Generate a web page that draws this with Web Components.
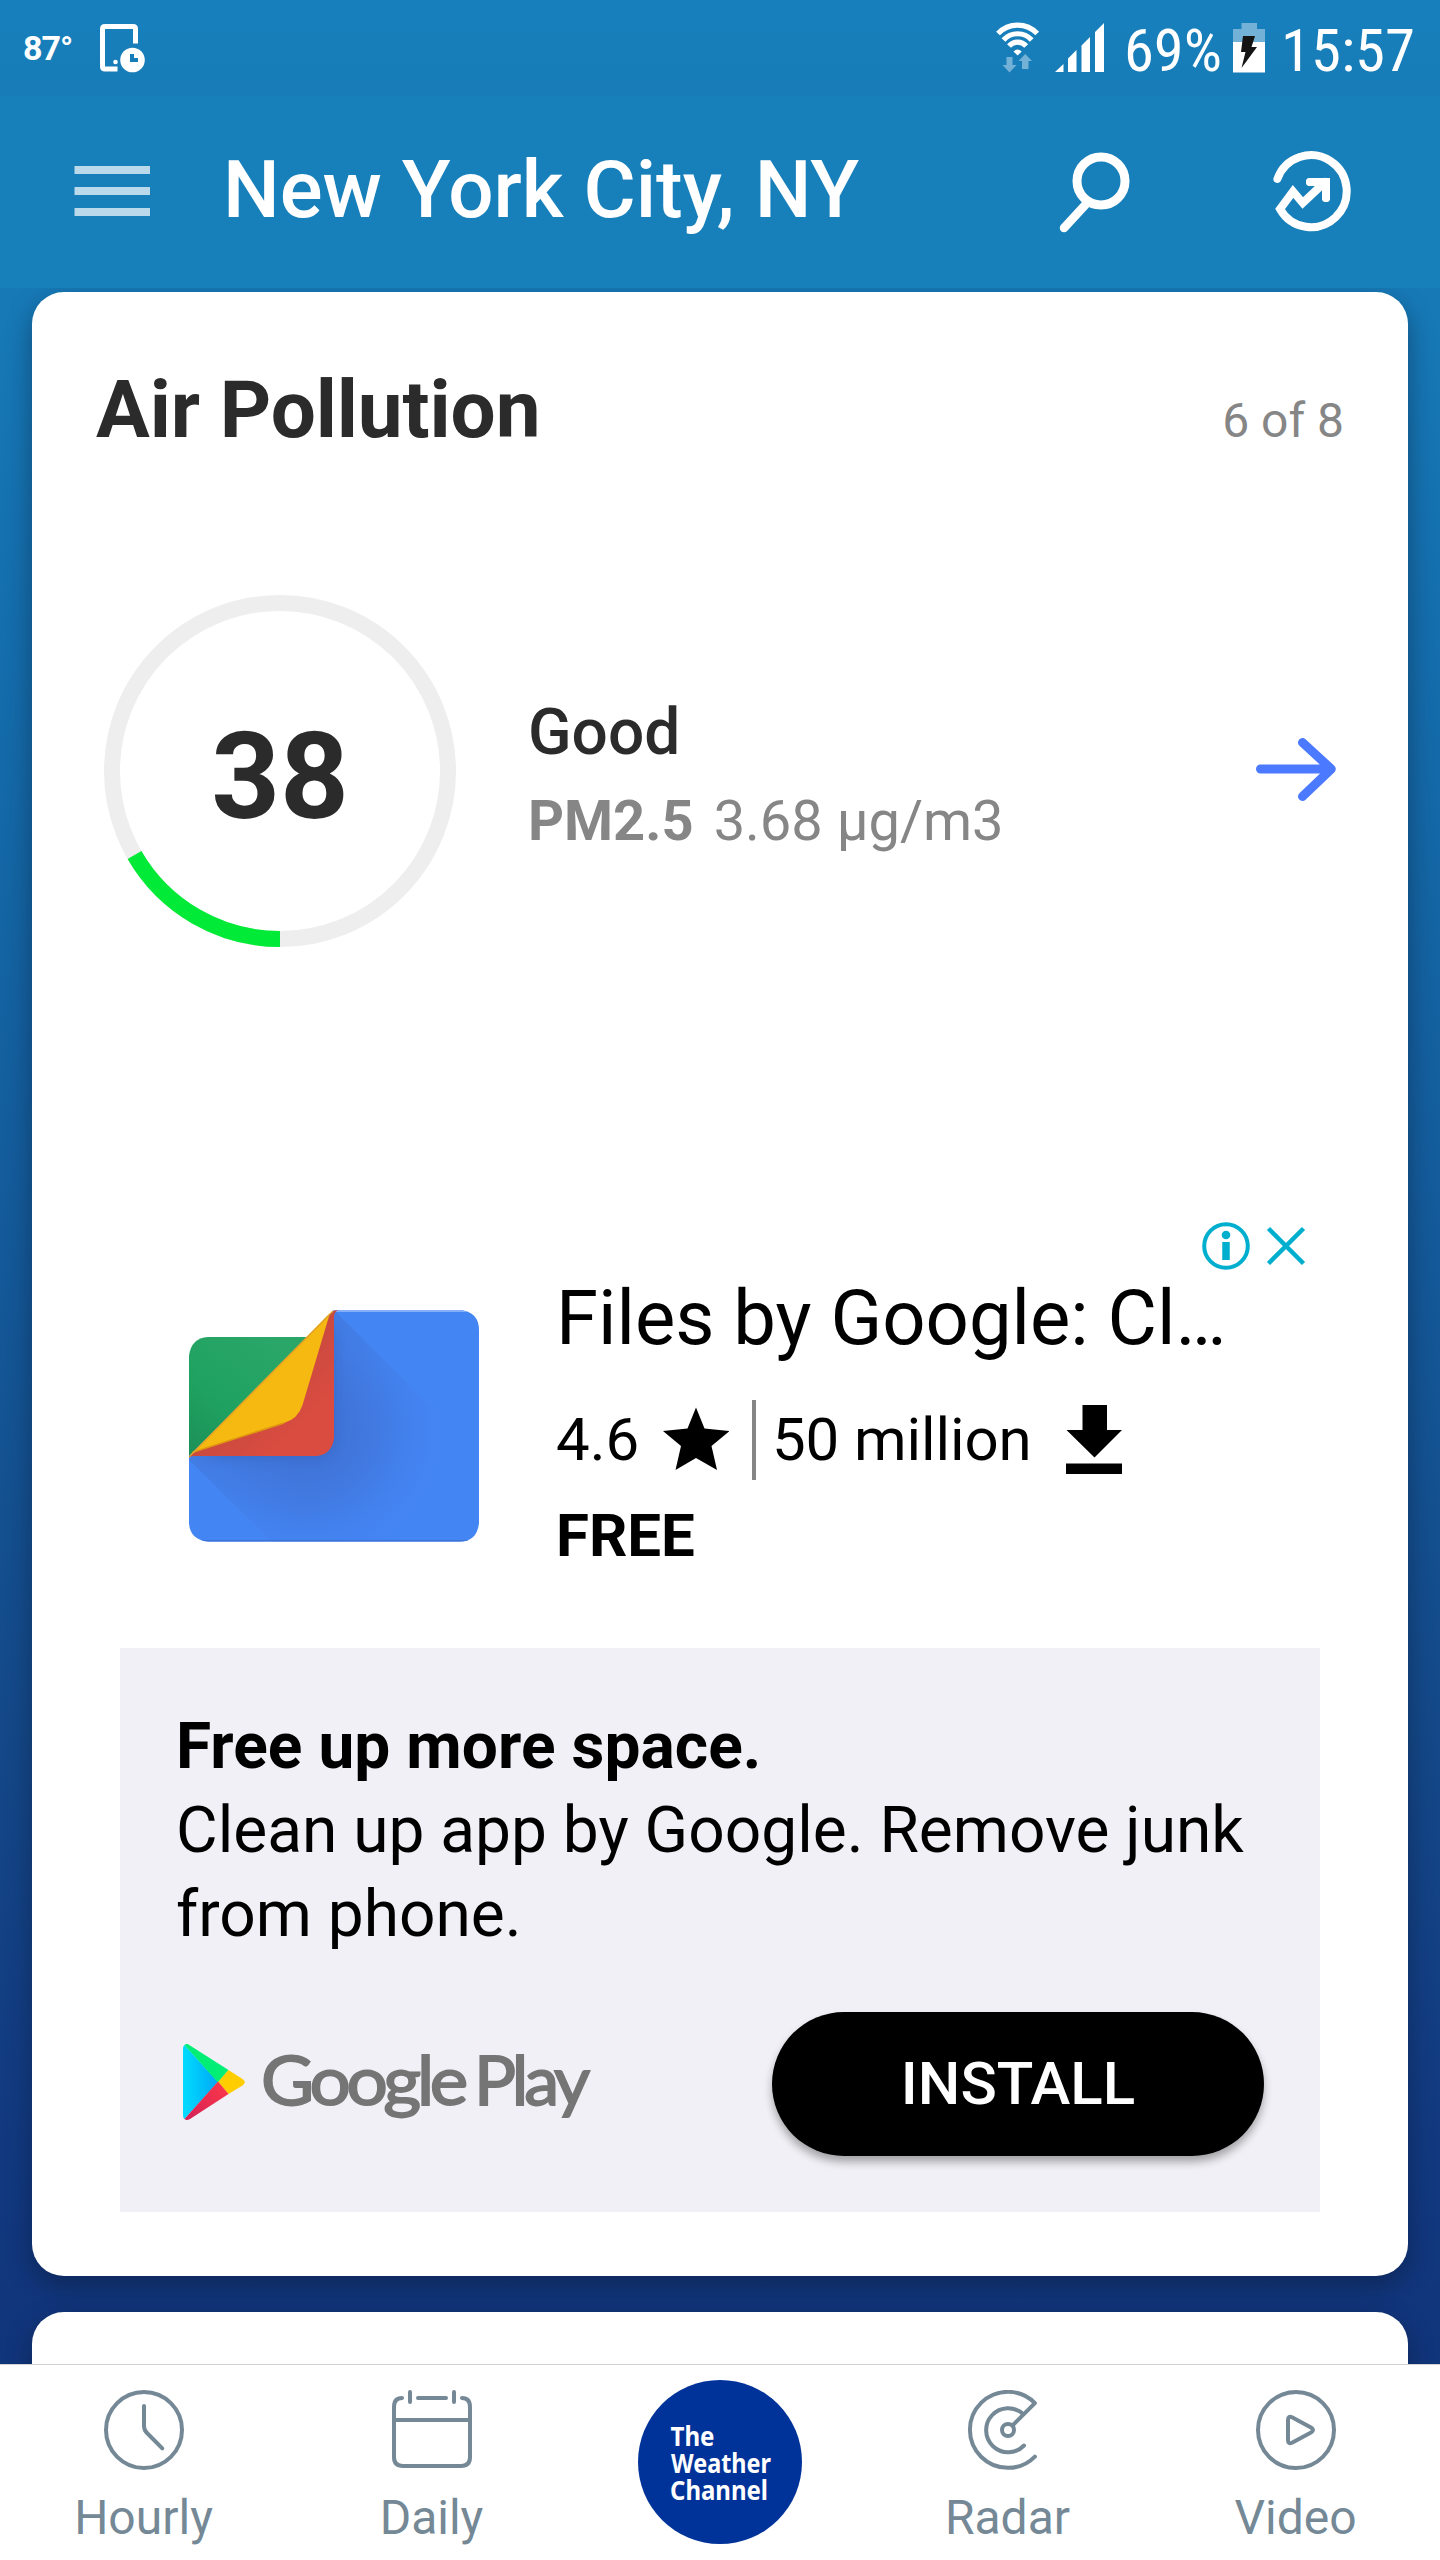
<!DOCTYPE html>
<html lang="en">
<head>
<meta charset="utf-8">
<title>New York City, NY</title>
<style>
html, body { margin: 0; padding: 0; }
body { width: 1440px; height: 2560px; overflow: hidden; font-family: Roboto, "Liberation Sans", sans-serif; background: #fff; }
</style>
</head>
<body>
<weather-app></weather-app>

<template id="t-weather-app">
  <style>
    :host { display: flex; flex-direction: column; width: 1440px; height: 2560px; }
    main { flex: 1; min-height: 0; overflow: hidden; display: flex; flex-direction: column; gap: 36px; padding: 4px 32px 0; box-sizing: border-box;
      background: linear-gradient(#177ab7 0, #1571b0 250px, #1467a6 560px, #145a9a 950px, #144888 1450px, #123980 1850px, #11357b 2076px); }
  </style>
  <status-bar></status-bar>
  <title-bar>New York City, NY</title-bar>
  <main>
    <feed-card style="height:1984px">
      <card-head slot="head"><span>Air Pollution</span><span slot="count">6 of 8</span></card-head>
      <air-quality value="38"><span slot="level">Good</span><span slot="kind">PM2.5</span><span slot="amount">3.68 µg/m3</span></air-quality>
      <app-ad></app-ad>
    </feed-card>
    <feed-card style="height:300px"></feed-card>
  </main>
  <tab-bar></tab-bar>
</template>

<template id="t-status-bar">
  <style>
    :host { display: flex; align-items: center; justify-content: space-between; height: 96px; padding: 0 26px 0 23px; background: linear-gradient(#1780bc, #177cb8); color: #fff; box-sizing: border-box; }
    div { display: flex; align-items: center; }
    svg { display: block; flex: none; }
    .t { font-size: 34px; font-weight: 700; letter-spacing: -1px; width: 77px; white-space: nowrap; }
    text { font-family: "Roboto Condensed", Roboto, sans-serif; font-size: 60px; fill: #fff; }
  </style>
  <div>
    <span class="t">87°</span>
    <svg width="46" height="96" viewBox="100 0 46 96">
      <path d="M135.500 43.500V29Q135.500 26.500 133 26.500H105Q102.500 26.500 102.500 29V66.500Q102.500 69 105 69H117.500" fill="none" stroke="#fff" stroke-width="5"/>
      <circle cx="115.500" cy="62" r="2.300" fill="#fff"/>
      <circle cx="132.500" cy="60" r="12.300" fill="#fff"/>
      <path d="M132 54V60H138" fill="none" stroke="#177db9" stroke-width="4"/>
    </svg>
  </div>
  <div>
    <svg width="420" height="96" viewBox="994 0 420 96">
      <g fill="none" stroke="#fff" stroke-width="5.200">
        <path d="M998 33.500A27 27 0 0 1 1037.200 33.500"/>
        <path d="M1003.500 40A19 19 0 0 1 1031.700 40"/>
        <path d="M1009 46A11.500 11.500 0 0 1 1026.200 46"/>
      </g>
      <path d="M1013.500 51.500Q1017.600 47.500 1021.700 51.500L1017.600 55.500Z" fill="#fff"/>
      <path d="M1006.500 57H1012.500V65H1016.500L1009.500 72.500L1002.500 65H1006.500ZM1022 69H1028.500V61H1032L1025.200 54L1018.500 61H1022Z" fill="#74b1d6"/>
      <path d="M1055 72L1063.500 64V72ZM1068 72V58.500L1076.500 50V72ZM1081.500 72V45.500L1090 37V72ZM1095 72V32L1104 23V72Z" fill="#fff"/>
      <text x="1124" y="71" textLength="98" lengthAdjust="spacingAndGlyphs">69%</text>
      <path d="M1241.500 23H1257V29H1265V42H1233V29H1241.500Z" fill="#74b1d6"/>
      <path d="M1233 42H1265V72.500H1233Z" fill="#fff"/>
      <path d="M1243 36H1255L1251.500 47H1257L1241.500 68L1245.500 52H1241Z" fill="#141414"/>
      <text x="1281" y="71" textLength="134" lengthAdjust="spacingAndGlyphs">15:57</text>
    </svg>
  </div>
</template>

<template id="t-title-bar">
  <style>
    :host { display: flex; align-items: center; height: 192px; background: #177fba; color: #fff; padding: 0 88px 0 74px; box-sizing: border-box; }
    svg { display: block; flex: none; }
    h1 { margin: 0 auto 5px 73px; font-size: 80px; line-height: 94px; font-weight: 500; white-space: nowrap; }
    .search { margin-right: 143px; }
  </style>
  <svg width="76" height="192" viewBox="74 96 76 192"><path d="M74.500 166H150V174H74.500ZM74.500 187H150V195H74.500ZM74.500 208H150V216H74.500Z" fill="#bad9ea"/></svg>
  <h1><slot></slot></h1>
  <svg class="search" width="71" height="192" viewBox="1058 96 71 192" fill="none" stroke="#fff" stroke-linecap="round">
    <circle cx="1100" cy="181" r="24" stroke-width="9"/><path d="M1086 203L1063 228" stroke-width="8.500"/>
  </svg>
  <svg width="79" height="192" viewBox="1273 96 79 192" fill="none" stroke="#fff" stroke-width="8" stroke-linecap="round">
    <path d="M1277.400 179A35.700 36 0 1 1 1280 209L1293 191.500L1302.800 203L1325 182M1310 182H1326V198" stroke-linejoin="miter"/>
    <path d="M1310 182H1326V198" stroke-linejoin="round"/>
  </svg>
</template>

<template id="t-feed-card">
  <style>
    :host { display: flex; flex-direction: column; flex: none; box-sizing: border-box; background: #fff; border-radius: 32px; padding: 71px 64px 0; box-shadow: 0 10px 26px rgba(10,20,40,.42); }
  </style>
  <slot name="head"></slot><slot></slot>
</template>

<template id="t-card-head">
  <style>
    :host { display: flex; align-items: baseline; justify-content: space-between; height: 94px; color: #2b2b2b; }
    h2 { margin: 0; font-size: 80px; line-height: 94px; font-weight: 700; letter-spacing: -.1px; }
    p { margin: 0; font-size: 48px; color: #868686; }
  </style>
  <h2><slot></slot></h2><p><slot name="count"></slot></p>
</template>

<template id="t-air-quality">
  <style>
    :host { display: flex; align-items: flex-start; margin: 138px 8px 0; height: 352px; color: #2b2b2b; }
    .ring { display: grid; width: 352px; height: 352px; flex: none; }
    .ring > * { grid-area: 1 / 1; }
    .num { place-self: center; padding-top: 11px; font-size: 120px; font-weight: 700; line-height: 140px; }
    .info { margin: 100px auto 0 72px; display: flex; flex-direction: column; gap: 17px; }
    .good { font-size: 64px; font-weight: 500; line-height: 76px; }
    .pm { display: flex; gap: 20px; font-size: 56px; line-height: 66px; color: #868686; white-space: nowrap; }
    b { font-weight: 700; }
    .arrow { margin-top: 142px; }
    svg { display: block; }
  </style>
  <div class="ring">
    <svg width="352" height="352" viewBox="0 0 352 352" fill="none" stroke-width="16">
      <circle cx="176" cy="176" r="168" stroke="#eeeeee"/>
      <path d="M176 344A168 168 0 0 1 30.500 260" stroke="#00ea37"/>
    </svg>
    <div class="num"></div>
  </div>
  <div class="info">
    <div class="good"><slot name="level"></slot></div>
    <div class="pm"><b><slot name="kind"></slot></b><slot name="amount"></slot></div>
  </div>
  <svg class="arrow" width="80" height="64" viewBox="1256 737 80 64" fill="none" stroke="#4b79ff" stroke-width="9" stroke-linecap="round" stroke-linejoin="round"><path d="M1260.500 769H1331M1302.500 742.500L1331.300 769L1302.500 796.500"/></svg>
</template>

<template id="t-app-ad">
  <style>
    :host { display: flex; flex-direction: column; margin: 275px 24px 0; color: #000; }
    svg { display: block; flex: none; }
    .choices { display: flex; justify-content: flex-end; padding-right: 14px; height: 48px; }
    .top { display: flex; height: 378px; padding-left: 69px; box-sizing: border-box; }
    .logo { margin-top: 39px; }
    .meta { margin: 3px 0 0 77px; display: flex; flex-direction: column; }
    .name { font-size: 76px; line-height: 90px; white-space: nowrap; }
    .stats { display: flex; align-items: center; height: 80px; margin: 37px 0 21px; font-size: 60px; line-height: 70px; }
    .rate { width: 107px; }
    .rule { width: 4px; height: 80px; background: #868686; margin: 0 16px 0 23px; }
    .count { width: 294px; white-space: nowrap; letter-spacing: -.1px; }
    .price { font-size: 60px; line-height: 70px; font-weight: 700; }
    .panel { background: #f0f0f6; height: 564px; padding: 57px 56px 55px; box-sizing: border-box; display: flex; flex-direction: column; gap: 55px; font-size: 64px; line-height: 84px; }
    .panel b { display: block; font-weight: 700; letter-spacing: .05px; }
    .foot { display: flex; justify-content: space-between; padding-left: 7px; height: 144px; }
    text { font-family: Lato, Roboto, sans-serif; font-size: 68px; fill: #757575; stroke: #757575; stroke-width: 1.800; letter-spacing: -4px; }
  </style>
  <div class="choices">
    <svg width="104" height="48" viewBox="1202 1222 104 48" fill="none" stroke="#00aecd" stroke-width="4.500">
      <circle cx="1226" cy="1246" r="21.800" stroke-width="4"/>
      <path d="M1226 1242V1260" stroke-width="7.500"/><circle cx="1226" cy="1235" r="4.300" fill="#00aecd" stroke="none"/>
      <path d="M1268.500 1228.500L1303.500 1263.500M1303.500 1228.500L1268.500 1263.500"/>
    </svg>
  </div>
  <div class="top">
    <svg class="logo" width="290" height="234" viewBox="189 1309 290 234">
      <defs>
        <clipPath id="body"><path d="M189 1456L334 1310H460Q479 1312 479 1330V1523Q477 1541.500 460 1541.500H208Q190 1540 189 1523Z"/></clipPath>
        <radialGradient id="sh" gradientUnits="userSpaceOnUse" cx="305" cy="1427" r="150"><stop offset="0" stop-color="#3d68c4" stop-opacity=".85"/><stop offset=".5" stop-color="#3f6fd0" stop-opacity=".5"/><stop offset="1" stop-color="#4285f4" stop-opacity="0"/></radialGradient>
        <linearGradient id="ap" gradientUnits="userSpaceOnUse" x1="262" y1="1383" x2="345" y2="1466"><stop offset="0" stop-color="#3f69bf" stop-opacity=".3"/><stop offset="1" stop-color="#4285f4" stop-opacity="0"/></linearGradient>
        <linearGradient id="gr" x1="0" y1="1" x2=".7" y2="0"><stop offset="0" stop-color="#1c8f58"/><stop offset=".45" stop-color="#1fa261"/><stop offset="1" stop-color="#2aa669"/></linearGradient>
        <linearGradient id="rd" x1="0" y1="0" x2="1" y2="1"><stop offset=".4" stop-color="#c5493f"/><stop offset=".8" stop-color="#db4c40"/></linearGradient>
        <filter id="bl" x="-30%" y="-30%" width="160%" height="160%"><feGaussianBlur stdDeviation="6"/></filter>
      </defs>
      <path d="M208 1337H308L189 1457V1356Q191 1338 208 1337Z" fill="url(#gr)"/>
      <g clip-path="url(#body)">
        <path d="M180 1300H490V1550H180Z" fill="#4485f4"/>
        <path d="M334 1310L480 1456V1543H273L189 1460Z" fill="url(#sh)"/>
        <path d="M334 1310L480 1456V1543H273L189 1460Z" fill="url(#ap)"/>
        <path d="M334 1325V1440Q332 1456 317 1458H205Z" fill="#2d55a8" opacity=".35" filter="url(#bl)"/>
        <path d="M334 1311H470" stroke="#83aef8" stroke-width="2"/>
        <path d="M196 1541H472" stroke="#3b72d6" stroke-width="2"/>
      </g>
      <path d="M189 1457L332 1312Q334 1310 338 1310Q334 1312 334 1317V1438Q332 1454 317 1456H195Q190 1456 189 1458Z" fill="url(#rd)"/>
      <path d="M189 1456L330 1313L302.500 1405Q298 1419 284 1423L196 1451Z" fill="#f5b911"/>
      <path d="M192 1452.500L284 1423" stroke="#df980f" stroke-width="1.500"/>
      <path d="M189 1457L333 1311" stroke="#dda02b" stroke-width="1.200"/>
    </svg>
    <div class="meta">
      <div class="name">Files by Google: Cl…</div>
      <div class="stats">
        <span class="rate">4.6</span>
        <svg width="66" height="66" viewBox="663 1407 66 66"><path d="M696 1407.500L704.500 1428.500L729.500 1431L711.500 1446L717 1470L696 1458L675.500 1470L681 1446L663 1431L687.500 1428.500Z"/></svg>
        <span class="rule"></span>
        <span class="count">50 million</span>
        <svg width="56" height="70" viewBox="1066 1405 56 70"><path d="M1082.500 1405H1107V1430H1122L1094.500 1457.500L1066.500 1430H1082.500ZM1066 1463.500H1122V1474H1066Z"/></svg>
      </div>
      <div class="price">FREE</div>
    </div>
  </div>
  <div class="panel">
    <div><b>Free up more space.</b>Clean up app by Google. Remove junk from phone.</div>
    <div class="foot">
      <svg width="420" height="144" viewBox="183 2012 420 144">
        <defs><linearGradient id="pb" x1="0" x2="1"><stop offset="0" stop-color="#00dcff"/><stop offset="1" stop-color="#00a8f5"/></linearGradient>
        <linearGradient id="pr" x1="1" y1="0" x2="0" y2="1"><stop offset="0" stop-color="#ff3a48"/><stop offset="1" stop-color="#d21f58"/></linearGradient></defs>
        <path d="M184.500 2045L218 2082L184.500 2119Q183 2118 183 2115V2049Q183 2046 184.500 2045Z" fill="url(#pb)"/>
        <path d="M184.500 2045Q186.500 2043 190 2045.500L228.500 2070L218 2082.500Z" fill="#00ee76"/>
        <path d="M228.500 2070L242.500 2079Q247 2082 242.500 2085.500L228.500 2094L218 2082Z" fill="#ffcd00"/>
        <path d="M184.500 2119Q186.500 2121 190 2119L228.500 2094L218 2081.500Z" fill="url(#pr)"/>
        <text x="261" y="2105" textLength="203" lengthAdjust="spacingAndGlyphs">Google</text>
        <text x="474" y="2105" textLength="112" lengthAdjust="spacingAndGlyphs">Play</text>
      </svg>
      <pill-button>INSTALL</pill-button>
    </div>
  </div>
</template>

<template id="t-pill-button">
  <style>
    :host { display: flex; align-items: center; justify-content: center; width: 492px; height: 144px; border-radius: 72px; background: #000; color: #fff; font-size: 60px; font-weight: 500; box-shadow: 0 6px 8px rgba(0,0,0,.32); padding-bottom: 1px; box-sizing: border-box; }
  </style>
  <slot></slot>
</template>

<template id="t-tab-bar">
  <style>
    :host { display: flex; height: 196px; box-sizing: border-box; border-top: 1px solid #d2d2d2; background: #fff; }
    .brand { flex: 1; display: flex; justify-content: center; padding-top: 15px; }
    text { font-family: "Noto Sans", "Open Sans", sans-serif; font-weight: 700; font-size: 27.500px; fill: #fff; }
  </style>
  <tab-item label="Hourly"><svg width="84" height="80" viewBox="102 2390 84 80" fill="none" stroke="#748896" stroke-width="4" stroke-linecap="round"><circle cx="144" cy="2430" r="38"/><path d="M144 2406V2426Q144 2430 147 2433L162.300 2448.300"/></svg></tab-item>
  <tab-item label="Daily"><svg width="84" height="80" viewBox="390 2390 84 80" fill="none" stroke="#748896" stroke-width="4" stroke-linecap="round"><path d="M402 2398Q394 2398 394 2407V2457Q394 2466 403 2466H461Q470 2466 470 2457V2407Q470 2398 462 2398M418 2398H446M410 2392V2402M454 2392V2402M394 2420H470"/></svg></tab-item>
  <div class="brand">
    <svg width="164" height="164" viewBox="638 2380 164 164"><circle cx="720" cy="2462" r="82" fill="#003399"/>
      <text><tspan x="670.500" y="2446" textLength="44" lengthAdjust="spacingAndGlyphs">The</tspan><tspan x="671" y="2473" textLength="100" lengthAdjust="spacingAndGlyphs">Weather</tspan><tspan x="670" y="2499.500" textLength="98" lengthAdjust="spacingAndGlyphs">Channel</tspan></text>
    </svg>
  </div>
  <tab-item label="Radar"><svg width="84" height="80" viewBox="966 2390 84 80" fill="none" stroke="#748896" stroke-width="4" stroke-linecap="round" stroke-linejoin="round"><path d="M1034.900 2456.600A38 38 0 1 1 1034.900 2403.100L1012.500 2425.500M1024 2445.500A22 22 0 1 1 1023 2414"/><circle cx="1008" cy="2430" r="6"/></svg></tab-item>
  <tab-item label="Video"><svg width="84" height="80" viewBox="1254 2390 84 80" fill="none" stroke="#748896" stroke-width="4" stroke-linejoin="round"><circle cx="1296" cy="2430" r="38"/><path d="M1288 2420Q1288 2415.500 1292 2417.300L1311 2427.500Q1315 2430 1311 2432.500L1292 2442.700Q1288 2444.500 1288 2440Z"/></svg></tab-item>
</template>

<template id="t-tab-item">
  <style>
    :host { flex: 1; display: flex; flex-direction: column; align-items: center; gap: 20px; padding-top: 25px; color: #748896; font-size: 48px; line-height: 56px; }
    ::slotted(svg) { display: block; }
    .label { padding-right: 1px; }
  </style>
  <slot></slot><span class="label"></span>
</template>

<script>
class TemplateElement extends HTMLElement {
  constructor() {
    super();
    const tpl = document.getElementById('t-' + this.localName);
    this.attachShadow({ mode: 'open' }).appendChild(document.importNode(tpl.content, true));
  }
}
for (const name of ['status-bar', 'title-bar', 'feed-card', 'card-head', 'app-ad', 'pill-button', 'tab-bar']) {
  customElements.define(name, class extends TemplateElement {});
}
customElements.define('air-quality', class extends TemplateElement {
  connectedCallback() { this.shadowRoot.querySelector('.num').textContent = this.getAttribute('value'); }
});
customElements.define('tab-item', class extends TemplateElement {
  connectedCallback() { this.shadowRoot.querySelector('.label').textContent = this.getAttribute('label'); }
});
customElements.define('weather-app', class extends TemplateElement {});
</script>
</body>
</html>
